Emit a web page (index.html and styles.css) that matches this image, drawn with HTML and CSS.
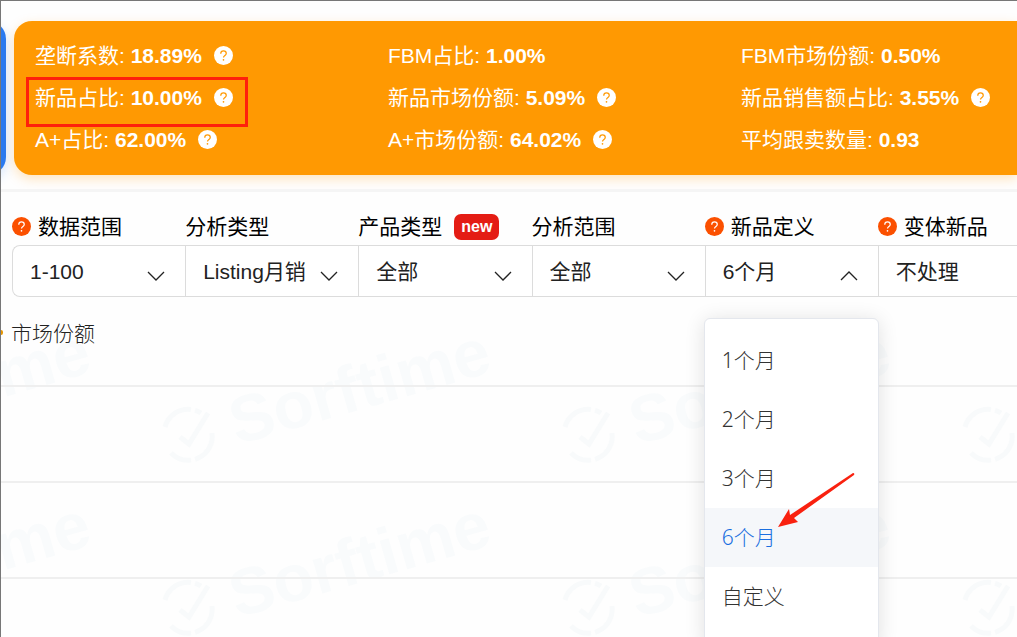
FILE: index.html
```html
<!DOCTYPE html>
<html lang="zh-CN">
<head>
    <meta charset="UTF-8">
    <meta name="viewport" content="width=device-width, initial-scale=1.0">
    <title>市场分析</title>
    <link rel="stylesheet" href="styles.css">
</head>
<body>
    <svg class="defs" aria-hidden="true">
        <symbol id="help" viewBox="0 0 20 20">
            <circle cx="10" cy="10" r="10" fill="currentColor"/>
            <path class="help-mark" d="M7.1 8.1C7.1 6.3 8.3 5.2 10 5.2S12.9 6.3 12.9 7.8C12.9 9.9 10 9.9 10 12.2"/>
            <circle class="help-dot" cx="10" cy="14.6" r="0.9"/>
        </symbol>
        <symbol id="arrow" viewBox="0 0 18 10">
            <path d="M1 1L9 9L17 1" fill="none" stroke="currentColor" stroke-width="1.3"/>
        </symbol>
    </svg>

    <section class="summary">
        <div class="card-prev"></div>
        <div class="card">
            <div class="metric">垄断系数: <b>18.89%</b><button class="help" aria-label="说明"><svg><use href="#help"/></svg></button></div>
            <div class="metric">FBM占比: <b>1.00%</b></div>
            <div class="metric">FBM市场份额: <b>0.50%</b></div>
            <div class="metric marked">新品占比: <b>10.00%</b><button class="help" aria-label="说明"><svg><use href="#help"/></svg></button></div>
            <div class="metric">新品市场份额: <b>5.09%</b><button class="help" aria-label="说明"><svg><use href="#help"/></svg></button></div>
            <div class="metric">新品销售额占比: <b>3.55%</b><button class="help" aria-label="说明"><svg><use href="#help"/></svg></button></div>
            <div class="metric">A+占比: <b>62.00%</b><button class="help" aria-label="说明"><svg><use href="#help"/></svg></button></div>
            <div class="metric">A+市场份额: <b>64.02%</b><button class="help" aria-label="说明"><svg><use href="#help"/></svg></button></div>
            <div class="metric">平均跟卖数量: <b>0.93</b></div>
        </div>
    </section>

    <section class="filters">
        <div class="filter">
            <div class="filter-title"><button class="help" aria-label="说明"><svg><use href="#help"/></svg></button><label for="range">数据范围</label></div>
            <div class="field"><select id="range"><option>1-100</option></select><svg class="arrow"><use href="#arrow"/></svg></div>
        </div>
        <div class="filter">
            <div class="filter-title"><label for="type">分析类型</label></div>
            <div class="field"><select id="type"><option>Listing月销</option></select><svg class="arrow"><use href="#arrow"/></svg></div>
        </div>
        <div class="filter">
            <div class="filter-title"><label for="product">产品类型</label><span class="tag">new</span></div>
            <div class="field"><select id="product"><option>全部</option></select><svg class="arrow"><use href="#arrow"/></svg></div>
        </div>
        <div class="filter">
            <div class="filter-title"><label for="scope">分析范围</label></div>
            <div class="field"><select id="scope"><option>全部</option></select><svg class="arrow"><use href="#arrow"/></svg></div>
        </div>
        <div class="filter">
            <div class="filter-title"><button class="help" aria-label="说明"><svg><use href="#help"/></svg></button><label for="newdef">新品定义</label></div>
            <div class="field open">
                <select id="newdef"><option>6个月</option></select><svg class="arrow"><use href="#arrow"/></svg>
                <div class="menu">
                    <button>1个月</button>
                    <button>2个月</button>
                    <button>3个月</button>
                    <button class="active">6个月</button>
                    <button>自定义</button>
                    <svg class="pointer" viewBox="0 0 78 56"><path d="M1 54L12 36L13 42L76 0Q78 0 77 2L17 45L21 49Z"/></svg>
                </div>
            </div>
        </div>
        <div class="filter">
            <div class="filter-title"><button class="help" aria-label="说明"><svg><use href="#help"/></svg></button><label for="variant">变体新品</label></div>
            <div class="field"><select id="variant"><option>不处理</option></select></div>
        </div>
    </section>

    <section class="chart">
        <svg class="watermark" aria-hidden="true">
            <defs>
                <g id="mark">
                    <g fill="none" stroke-width="5">
                        <path d="M-24 -8A24 24 0 0 1 12 -22M23 -2A24 24 0 0 1 -18 18" stroke-dasharray="34 4"/>
                        <path d="M-9 2L0 9L19 -22"/>
                    </g>
                    <text x="48" y="10" transform="rotate(-16 48 10)" stroke="none">Sorftime</text>
                </g>
            </defs>
            <use href="#mark" x="-212" y="138"/>
            <use href="#mark" x="188" y="138"/>
            <use href="#mark" x="588" y="138"/>
            <use href="#mark" x="988" y="138"/>
            <use href="#mark" x="-212" y="311"/>
            <use href="#mark" x="188" y="311"/>
            <use href="#mark" x="588" y="311"/>
            <use href="#mark" x="988" y="311"/>
        </svg>
        <div class="legend"><i class="legend-dot"></i>市场份额</div>
        <div class="row"></div>
        <div class="row"></div>
        <div class="row"></div>
    </section>
</body>
</html>
```
FILE: styles.css
```css
* { margin: 0; padding: 0; box-sizing: border-box; }
body {
    display: flex;
    flex-direction: column;
    font-family: "Liberation Sans", "Noto Sans CJK SC", sans-serif;
    font-size: 21px;
    color: #222;
    background: #fefefe;
    height: 100vh;
    overflow: hidden;
    border-top: 1px solid #777;
    border-left: 1px solid #777;
}
button, select { font: inherit; color: inherit; border: none; background: none; }
button { cursor: pointer; }
svg { display: block; }
.defs { position: absolute; width: 0; height: 0; }

.help { width: 19px; height: 19px; flex: none; }
.help svg { width: 19px; height: 19px; }
.help-mark { fill: none; stroke: var(--mark); stroke-width: 1.3; }
.help-dot { fill: var(--mark); }

/* summary card */
.summary {
    display: flex;
    flex: none;
    gap: 8px;
    padding: 20px 0 14px;
    border-bottom: 3px solid #f5f5f5;
    overflow: hidden;
}
.card-prev {
    flex: none;
    width: 100px;
    margin-left: -95px;
    border-radius: 18px;
    background: #2a7af0;
    box-shadow: 0 4px 12px rgba(42,122,240,0.2);
}
.card {
    flex: 1;
    display: grid;
    grid-template-columns: 353fr 353fr 276fr;
    padding: 14px 0 14px 21px;
    border-radius: 18px 0 0 18px;
    background: #ff9902;
    color: #fff;
    box-shadow: 0 4px 12px rgba(255,153,2,0.25);
    --mark: #ff9902;
}
.metric {
    position: relative;
    justify-self: start;
    height: 42px;
    line-height: 42px;
    white-space: nowrap;
}
.metric .help { margin-left: 12px; vertical-align: -2px; }
.marked::after {
    content: "";
    position: absolute;
    inset: 0 -15px -8px -9px;
    border: 3px solid #ff200c;
}

/* filters */
.filters {
    flex: none;
    display: grid;
    grid-template-columns: repeat(5, 173fr) 139fr;
    padding: 16px 0 0 11px;
}
.filter-title {
    display: flex;
    align-items: center;
    height: 37px;
    color: #000;
    white-space: nowrap;
    --mark: #fff;
}
.filter-title label { padding-bottom: 4px; }
.filter-title .help { color: #fb5000; margin-right: 7px; }
.tag {
    margin-left: 12px;
    padding: 0 7px;
    border-radius: 7px;
    background: #e41c14;
    color: #fff;
    font-size: 16px;
    font-weight: bold;
    line-height: 26px;
}
.field {
    position: relative;
    display: flex;
    align-items: center;
    height: 52px;
    border: 1px solid #dcdcdc;
    border-right: none;
    background: #fff;
}
.filter:first-child .field { border-radius: 8px 0 0 8px; }
.field select {
    appearance: none;
    width: 100%;
    height: 50px;
    padding-left: 17px;
    outline: none;
}
.arrow {
    position: absolute;
    right: 20px;
    top: 25px;
    width: 18px;
    height: 10px;
    pointer-events: none;
}
.open .arrow { transform: rotate(180deg); }

.menu {
    position: absolute;
    z-index: 10;
    top: 72px;
    left: -2px;
    right: -1px;
    padding: 12px 0 20px;
    border: 1px solid #e4e7ed;
    border-radius: 6px;
    background: #fff;
    box-shadow: 0 2px 20px rgba(0,0,0,0.12);
    font-family: "Noto Sans", "Noto Sans CJK SC", sans-serif;
    font-weight: 300;
    color: #333;
}
.menu button {
    display: block;
    width: 100%;
    height: 59px;
    padding: 0 0 3px 17px;
    text-align: left;
}
.menu .active { background: #f5f7fa; color: #1a6fe0; }
.pointer {
    position: absolute;
    left: 72px;
    top: 154px;
    width: 78px;
    height: 56px;
    fill: #f9210f;
}

/* chart */
.chart { position: relative; flex: 1; min-height: 0; overflow: hidden; }
.watermark {
    position: absolute;
    inset: 0;
    width: 100%;
    height: 100%;
    font-size: 66px;
    font-weight: bold;
    fill: #f9fbfc;
    stroke: #f8fafb;
}
.legend {
    position: relative;
    display: flex;
    align-items: center;
    height: 88px;
    padding-bottom: 18px;
    font-weight: 300;
    color: #222;
}
.legend-dot {
    width: 2px;
    height: 5px;
    margin-right: 8px;
    border-radius: 0 3px 3px 0;
    background: #e79600;
}
.row {
    position: relative;
    height: 96px;
    border-top: 2px solid #efefef;
}
```
